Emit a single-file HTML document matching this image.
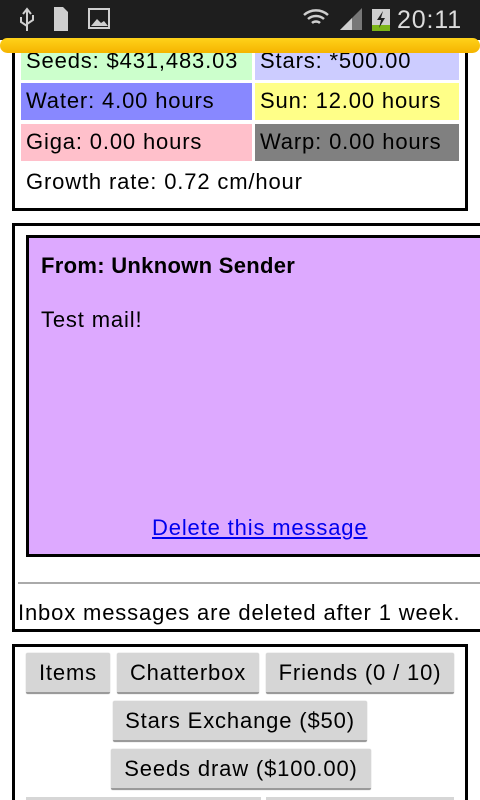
<!DOCTYPE html>
<html><head><meta charset="utf-8"><style>
*{margin:0;padding:0;box-sizing:border-box}
body{width:480px;height:800px;overflow:hidden;background:#fff}
#w{position:relative;width:480px;height:800px;overflow:hidden;font-family:"Liberation Sans",sans-serif;font-size:22px;letter-spacing:0.85px;color:#000}
.a{position:absolute}
.cell{position:absolute;height:37px;line-height:36px;padding-left:5px;white-space:nowrap}
.btn{position:absolute;height:41px;background:#d6d6d6;border-bottom:2px solid #9a9a9a;border-radius:2px;text-align:center;line-height:40px;font-size:22px;box-shadow:0 0 1px #aaa;white-space:nowrap}
</style></head><body><div id="w">
<div class="a" style="left:12px;top:20px;width:456px;height:191px;border:3px solid #000"></div>
<div class="cell" style="left:21px;top:43px;width:231px;background:#ccffcc">Seeds: $431,483.03</div>
<div class="cell" style="left:255px;top:43px;width:204px;background:#ccccff">Stars: *500.00</div>
<div class="cell" style="left:21px;top:83px;width:231px;background:#8888ff">Water: 4.00 hours</div>
<div class="cell" style="left:255px;top:83px;width:204px;background:#ffff88">Sun: 12.00 hours</div>
<div class="cell" style="left:21px;top:124px;width:231px;background:#ffc0cb">Giga: 0.00 hours</div>
<div class="cell" style="left:255px;top:124px;width:204px;background:#808080">Warp: 0.00 hours</div>
<div class="a" style="left:26px;top:169px;white-space:nowrap">Growth rate: 0.72 cm/hour</div>

<div class="a" style="left:12px;top:223px;width:468px;height:409px;border:3px solid #000;border-right:none"></div>
<div class="a" style="left:26px;top:235px;width:454px;height:322px;border:3px solid #000;border-right:none;background:#dda9ff"></div>
<div class="a" style="left:41px;top:253px;font-weight:bold;letter-spacing:0.3px">From: Unknown Sender</div>
<div class="a" style="left:41px;top:307px">Test mail!</div>
<div class="a" style="left:152px;top:515px;color:#0000ee;text-decoration:underline">Delete this message</div>
<div class="a" style="left:18px;top:582px;width:462px;height:2px;background:#aaa"></div>
<div class="a" style="left:18px;top:600px;white-space:nowrap">Inbox messages are deleted after 1 week.</div>

<div class="a" style="left:12px;top:644px;width:456px;height:156px;border:3px solid #000;border-bottom:none"></div>
<div class="btn" style="left:26px;top:653px;width:84px">Items</div>
<div class="btn" style="left:117px;top:653px;width:142px">Chatterbox</div>
<div class="btn" style="left:266px;top:653px;width:188px">Friends (0 / 10)</div>
<div class="btn" style="left:113px;top:701px;width:254px">Stars Exchange ($50)</div>
<div class="btn" style="left:111px;top:749px;width:260px">Seeds draw ($100.00)</div>
<div class="a" style="left:26px;top:797px;width:235px;height:3px;background:#d6d6d6"></div>
<div class="a" style="left:266px;top:797px;width:188px;height:3px;background:#d6d6d6"></div>

<div class="a" style="left:0;top:0;width:480px;height:40px;background:#1e1e1e"></div>
<div class="a" style="left:0;top:38px;width:480px;height:15px;border-radius:8px;background:linear-gradient(#ffd21a,#f5b400)"></div>
<svg class="a" style="left:0;top:0" width="480" height="38">
<g fill="#cfcfcf" stroke="#cfcfcf">
<path d="M27 9v22M23 14l4-5 4 5M21 17v5l6 4M33 15v5l-6 4" fill="none" stroke-width="2"/>
<path d="M54 7h9l5 5v19h-14z" stroke="none"/>
<rect x="89" y="9" width="20" height="19" fill="none" stroke-width="2"/>
<path d="M91 26l6-7 4 4 3-2 4 5z" stroke="none"/>
<path d="M304 15a18 18 0 0 1 24 0M308 19a12 12 0 0 1 16 0M312 23a6 6 0 0 1 8 0" fill="none" stroke-width="2.5"/>
<path d="M340 30l22-22v22z" stroke="none" opacity="0.5"/>
<path d="M340 30l12-12v12z" stroke="none"/>
<rect x="372" y="9" width="18" height="22" stroke="none"/>
</g>
<rect x="372" y="25" width="18" height="6" fill="#7cb518"/>
<path d="M383 11l-6 9h4l-2 8 6-10h-4z" fill="#1e1e1e"/>
<text x="397" y="28" font-family="Liberation Sans" font-size="25" fill="#dcdcdc">20:11</text>
</svg>
</div></body></html>
